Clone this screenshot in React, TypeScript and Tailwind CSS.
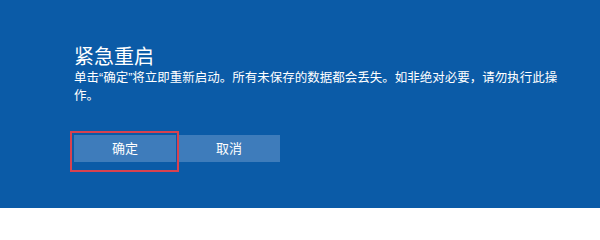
export default function App() {
  return (
    <div
      className="w-[600px] h-[208px] bg-[#0b5ba7] text-white overflow-hidden"
      style={{ fontFamily: '"Liberation Sans", "Noto Sans CJK SC", sans-serif' }}
    >
      <div className="pl-[74px] pt-[45px]">
        <h1 className="text-[20px] leading-[24px] font-normal">紧急重启</h1>
        <p className="w-[492px] text-[12.5px] leading-[17.5px] mt-px">
          单击“确定”将立即重新启动。所有未保存的数据都会丢失。如非绝对必要，请勿执行此操作。
        </p>
        <div className="relative mt-[30px] flex gap-[2px]">
          <button className="w-[102px] h-[27px] bg-[#3e7cbb] text-[13px] text-white">确定</button>
          <button className="w-[102px] h-[27px] bg-[#3e7cbb] text-[13px] text-white">取消</button>
          {/* red annotation box around the confirm button */}
          <div className="absolute left-[-4px] top-[-4px] w-[109px] h-[41px] border-[2.5px] border-[#d8424f] pointer-events-none" />
        </div>
      </div>
    </div>
  );
}
